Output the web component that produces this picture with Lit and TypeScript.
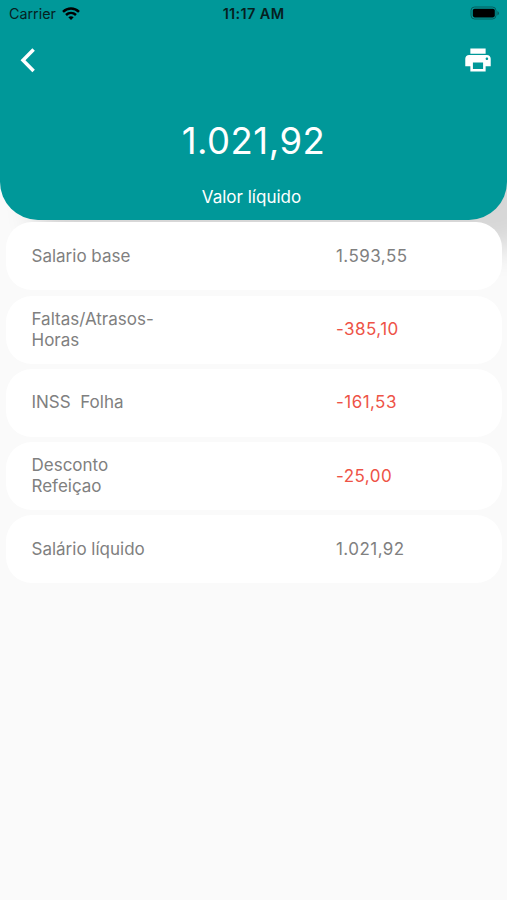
import { LitElement, html, css } from "lit";
import { customElement } from "lit/decorators.js";
import { classMap } from "lit/directives/class-map.js";

interface Entry {
  label: string;
  value: string;
  negative?: boolean;
}

const ENTRIES: Entry[] = [
  { label: "Salario base", value: "1.593,55" },
  { label: "Faltas/Atrasos-\nHoras", value: "-385,10", negative: true },
  { label: "INSS  Folha", value: "-161,53", negative: true },
  { label: "Desconto\nRefeiçao", value: "-25,00", negative: true },
  { label: "Salário líquido", value: "1.021,92" },
];

@customElement("app-root")
export class AppRoot extends LitElement {
  static styles = css`
    :host {
      display: block;
      height: 900px;
      overflow: hidden;
      background: #fafafa;
      font-family: Inter, "Liberation Sans", sans-serif;
    }
    .header {
      box-sizing: border-box;
      height: 219.5px;
      background: #009899;
      border-radius: 0 0 38px 38px;
      box-shadow: 34px 30px 30px rgba(0, 0, 0, 0.14);
      color: #fff;
    }
    .status {
      display: grid;
      grid-template-columns: 1fr auto 1fr;
      align-items: center;
      height: 26px;
      padding: 0 7px 0 9px;
      color: #06211f;
      font-size: 14.3px;
    }
    .carrier {
      display: flex;
      align-items: center;
      gap: 6px;
    }
    .time {
      padding-right: 2px;
      font-weight: 600;
      font-size: 14.5px;
      letter-spacing: 0.35px;
    }
    .battery {
      justify-self: end;
    }
    .bar {
      display: flex;
      justify-content: space-between;
      align-items: center;
      height: 67px;
      padding: 0 15px 0 20px;
    }
    svg {
      display: block;
    }
    .total {
      margin-top: 23px;
      height: 50px;
      line-height: 50px;
      text-align: center;
      font-size: 36.5px;
      letter-spacing: 0.5px;
    }
    .caption {
      margin-top: 20px;
      line-height: 22px;
      text-align: center;
      font-size: 17px;
      padding-right: 4px;
    }
    .list {
      position: relative;
      display: flex;
      flex-direction: column;
      gap: 5.3px;
      padding: 2.8px 5px 0 6px;
    }
    .card {
      box-sizing: border-box;
      display: grid;
      grid-template-columns: 304.5px 1fr;
      align-items: center;
      height: 68px;
      padding: 0 25.5px;
      border-radius: 26px;
      background: #fff;
      color: #808080;
      font-size: 17px;
      line-height: 21px;
    }
    .label {
      white-space: pre;
    }
    .value {
      letter-spacing: 0.45px;
    }
    .negative {
      color: #ee5347;
    }
  `;

  render() {
    return html`
      <header class="header">
        <div class="status">
          <div class="carrier">
            <span class="name">Carrier</span>
            <svg width="18" height="13" viewBox="0 0 18 13" fill="none" stroke="#000" stroke-width="2.5">
              <path d="M1 4.9C5.6.5 12.4.5 17 4.9" />
              <path d="M4 8C6.9 5.3 11.1 5.3 14 8" />
              <path d="M9 13 6.3 10.3Q9 8.1 11.7 10.3Z" fill="#000" stroke="none" />
            </svg>
          </div>
          <span class="time">11:17 AM</span>
          <svg class="battery" width="30" height="14" viewBox="0 0 30 14">
            <rect x="1" y="1" width="25" height="12" rx="3.6" fill="none" stroke="#045e5e" />
            <rect x="2.8" y="2.8" width="22" height="8.6" rx="1.8" fill="#000" />
            <path d="M27.4 5v4.4q1.6-.8 1.6-2.2t-1.6-2.2Z" fill="#045e5e" />
          </svg>
        </div>
        <div class="bar">
          <svg width="16" height="26" viewBox="0 0 16 26" fill="none" stroke="#fff" stroke-width="3.5">
            <path d="M13.6 2.4 3 13.2l10.6 10.8" />
          </svg>
          <svg width="28" height="28" viewBox="1 1 22 22" fill="#fff">
            <path
              d="M19 8H5c-1.66 0-3 1.34-3 3v6h4v4h12v-4h4v-6c0-1.66-1.34-3-3-3zm-3 11H8v-5h8v5zm3-7c-.55 0-1-.45-1-1s.45-1 1-1 1 .45 1 1-.45 1-1 1zm-1-9H6v4h12V3z"
            />
          </svg>
        </div>
        <div class="total">1.021,92</div>
        <div class="caption">Valor líquido</div>
      </header>
      <main class="list">
        ${ENTRIES.map(
          (e) => html`
            <section class="card">
              <span class="label">${e.label}</span>
              <span class=${classMap({ value: true, negative: !!e.negative })}>${e.value}</span>
            </section>
          `
        )}
      </main>
    `;
  }
}
